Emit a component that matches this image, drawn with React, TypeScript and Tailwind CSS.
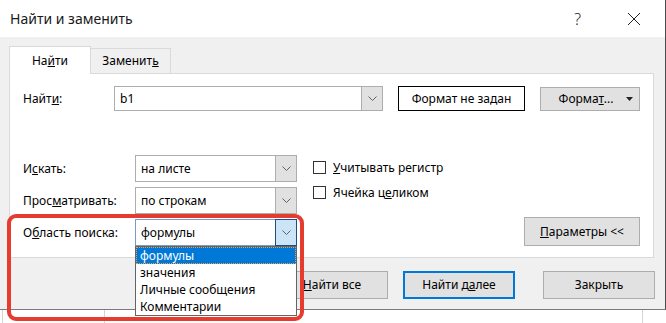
import React from "react";

const font = { fontFamily: '"Segoe UI", "Noto Sans", "Open Sans", sans-serif' };

function Chevron({ className }: { className?: string }) {
  return (
    <svg width="9" height="5" viewBox="0 0 9 5" className={className}>
      <path d="M0.5 0.5 L4.5 4.5 L8.5 0.5" fill="none" stroke="#606060" strokeWidth="1" />
    </svg>
  );
}

function Combo({ value, focused }: { value: string; focused?: boolean }) {
  return (
    <div
      className={
        "flex h-[27px] w-[162px] items-stretch border bg-white " +
        (focused ? "border-[#7a9cc2]" : "border-[#adadad]")
      }
    >
      <div className="flex flex-1 items-center pl-[5px] text-[12px] text-black">{value}</div>
      <div
        className={
          "flex w-[21px] items-center justify-center border-l " +
          (focused ? "border border-[#1f4f82] bg-[#cce4f7] -m-px w-[22px]" : "border-[#adadad] bg-[#e1e1e1]")
        }
      >
        <Chevron />
      </div>
    </div>
  );
}

function Checkbox({ label }: { label: React.ReactNode }) {
  return (
    <div className="flex h-[25px] items-center gap-[7px] text-[12px] text-black">
      <div className="h-[13px] w-[13px] border border-[#333] bg-white" />
      <span>{label}</span>
    </div>
  );
}

function Btn({ children, w, focus }: { children: React.ReactNode; w: string; focus?: boolean }) {
  return (
    <div
      className={
        "flex h-[28px] items-center justify-center bg-[#e1e1e1] text-[12px] text-black " +
        w +
        (focus ? " border-2 border-[#0078d7]" : " border border-[#adadad]")
      }
    >
      {children}
    </div>
  );
}

export default function App() {
  return (
    <div className="relative h-[323px] w-[666px] overflow-hidden bg-white" style={font}>
      <div className="flex h-[310px] flex-col border-b border-r border-b-[#7a7a7a] border-r-[#4a4a4a]">
        {/* title bar */}
        <div className="flex h-[37px] items-center bg-white pl-[10px] pr-[24px]">
          <span className="text-[14px] text-[#1a1a1a]">Найти и заменить</span>
          <span className="ml-auto text-[16px] font-light text-[#222]">?</span>
          <svg width="14" height="14" viewBox="0 0 14 14" className="ml-[46px]">
            <path d="M1 1 L13 13 M13 1 L1 13" stroke="#222" strokeWidth="1" />
          </svg>
        </div>

        <div className="flex-1 bg-[#f0f0f0] px-[9px] pt-[9px]">
          {/* tabs */}
          <div className="flex h-[27px] items-end">
            <div className="relative z-10 -mb-px flex h-[28px] w-[82px] items-center justify-center border border-b-0 border-[#d9d9d9] bg-white text-[12px] text-black">
              На<u>й</u>ти
            </div>
            <div className="flex h-[25px] w-[80px] items-center justify-center border border-b-0 border-l-0 border-[#d9d9d9] bg-[#f0f0f0] text-[12px] text-black">
              Заменит<u>ь</u>
            </div>
          </div>

          {/* panel */}
          <div className="flex h-[185px] w-[645px] flex-col border border-[#d9d9d9] bg-white pl-[13px] pr-[13px] pt-[12px]">
            <div className="flex h-[25px] items-center">
              <div className="w-[91px] text-[12px] text-black">
                Найт<u>и</u>:
              </div>
              <div className="flex h-[25px] w-[269px] items-stretch border border-[#adadad]">
                <div className="flex flex-1 items-center pl-[5px] text-[12px] text-black">b1</div>
                <div className="flex w-[21px] items-center justify-center border-l border-[#adadad] bg-[#e1e1e1]">
                  <Chevron />
                </div>
              </div>
              <div className="ml-[15px] flex h-[25px] w-[127px] items-center justify-center border border-black bg-white text-[12px] text-black">
                Формат не задан
              </div>
              <div className="ml-[15px] flex h-[24px] w-[100px] items-center border border-[#adadad] bg-[#e1e1e1] text-[12px] text-black">
                <span className="flex-1 pl-[5px] text-center">
                  Форма<u>т</u>...
                </span>
                <svg width="7" height="4" viewBox="0 0 7 4" className="mr-[6px]">
                  <path d="M0 0 H7 L3.5 4 Z" fill="#222" />
                </svg>
              </div>
            </div>

            <div className="mt-[44px] flex">
              <div className="flex flex-col gap-[5px]">
                {[
                  [<>И<u>с</u>кать:</>, "на листе"],
                  [<>Прос<u>м</u>атривать:</>, "по строкам"],
                  [<>О<u>б</u>ласть поиска:</>, "формулы"],
                ].map(([label, value], i) => (
                  <div key={i} className="flex items-center">
                    <div className="w-[112px] text-[12px] text-black">{label}</div>
                    <Combo value={value as string} focused={i === 2} />
                  </div>
                ))}
              </div>
              <div className="ml-[16px] flex flex-col">
                <Checkbox label={<><u>У</u>читывать регистр</>} />
                <Checkbox label={<>Ячейка ц<u>е</u>ликом</>} />
              </div>
              <div className="ml-auto self-end">
                <div className="flex h-[29px] w-[116px] items-center justify-center border border-[#adadad] bg-[#e1e1e1] text-[12px] text-black">
                  <u>П</u>араметры &lt;&lt;
                </div>
              </div>
            </div>
          </div>

          {/* bottom buttons */}
          <div className="mt-[13px] flex pl-[267px]">
            <Btn w="w-[112px]">
              <u>Н</u>айти все
            </Btn>
            <div className="ml-[15px]">
              <Btn w="w-[112px]" focus>
                Найти д<u>а</u>лее
              </Btn>
            </div>
            <div className="ml-[28px]">
              <Btn w="w-[112px]">Закрыть</Btn>
            </div>
          </div>
        </div>
      </div>

      {/* sheet grid behind the dialog */}
      <div className="flex h-[13px]">
        <div className="ml-[2px] w-px bg-[#d4d4d4]" />
        <div className="ml-[101px] w-px bg-[#d4d4d4]" />
        <div className="ml-[537px] w-px bg-[#d4d4d4]" />
      </div>

      {/* opened dropdown list */}
      <div className="absolute left-[135px] top-[246px] z-20 flex w-[162px] flex-col border border-[#646464] bg-white p-0 text-[12px] text-black">
        <div className="flex h-[17px] items-center border border-dotted border-[#f0a040] bg-[#0078d7] pl-[3px] text-white">
          формулы
        </div>
        <div className="flex h-[17px] items-center pl-[4px]">значения</div>
        <div className="flex h-[17px] items-center pl-[4px]">Личные сообщения</div>
        <div className="flex h-[17px] items-center pl-[4px]">Комментарии</div>
      </div>

      {/* red annotation frame */}
      <div className="pointer-events-none absolute left-[7px] top-[214px] z-30 h-[107px] w-[297px] rounded-[9px] border-4 border-[#e53c2f]" />
    </div>
  );
}
